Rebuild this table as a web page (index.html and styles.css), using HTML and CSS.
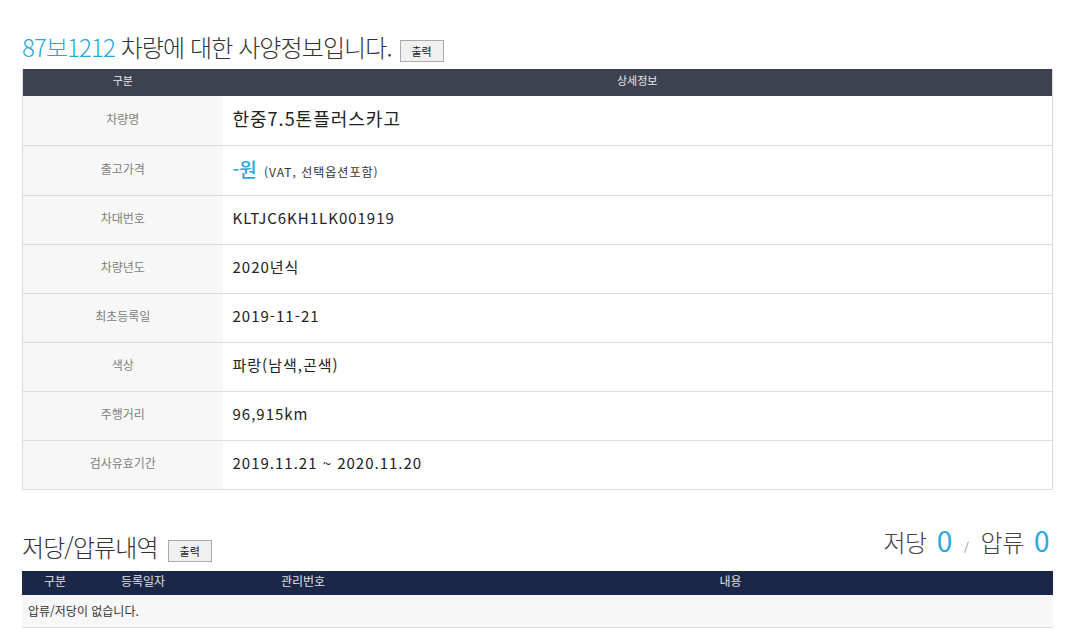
FILE: index.html
```html
<!DOCTYPE html>
<html lang="ko">
<head>
<meta charset="utf-8">
<link rel="stylesheet" href="styles.css">
</head>
<body>
<div class="page">
  <div class="title-row">
    <h2 class="title"><span class="plate">87보1212</span> 차량에 대한 사양정보입니다.</h2>
    <button class="btn">출력</button>
  </div>
  <table class="spec">
    <thead>
      <tr><th class="c-label">구분</th><th>상세정보</th></tr>
    </thead>
    <tbody>
      <tr><td class="c-label">차량명</td><td class="c-value big">한중7.5톤플러스카고</td></tr>
      <tr class="tall"><td class="c-label">출고가격</td><td class="c-value"><span class="price">-원</span> <span class="small">(VAT, 선택옵션포함)</span></td></tr>
      <tr><td class="c-label">차대번호</td><td class="c-value">KLTJC6KH1LK001919</td></tr>
      <tr><td class="c-label">차량년도</td><td class="c-value">2020년식</td></tr>
      <tr><td class="c-label">최초등록일</td><td class="c-value">2019-11-21</td></tr>
      <tr><td class="c-label">색상</td><td class="c-value">파랑(남색,곤색)</td></tr>
      <tr><td class="c-label">주행거리</td><td class="c-value">96,915km</td></tr>
      <tr><td class="c-label">검사유효기간</td><td class="c-value">2019.11.21 ~ 2020.11.20</td></tr>
    </tbody>
  </table>

  <div class="sec-row">
    <div class="sec-left">
      <h2 class="title">저당/압류내역</h2>
      <button class="btn">출력</button>
    </div>
    <div class="counts">저당 <span class="num">0</span> <span class="slash">/</span> 압류 <span class="num">0</span></div>
  </div>
  <table class="lien">
    <thead>
      <tr><th class="w1">구분</th><th class="w2">등록일자</th><th class="w3">관리번호</th><th>내용</th></tr>
    </thead>
    <tbody>
      <tr><td colspan="4" class="empty">압류/저당이 없습니다.</td></tr>
    </tbody>
  </table>
</div>
</body>
</html>
```
FILE: styles.css
```css
html, body {
  margin: 0;
  padding: 0;
  background: #fff;
}
body {
  font-family: "Noto Sans CJK KR", "Noto Sans", sans-serif;
  color: #333;
}
.page {
  width: 1031px;
  margin-left: 22px;
  padding-top: 28px;
}
.title-row {
  display: flex;
  align-items: flex-end;
  height: 34px;
}
.title {
  margin: 0;
  font-size: 24px;
  font-weight: 300;
  letter-spacing: -0.9px;
  color: #333;
  line-height: 30px;
}
.plate {
  color: #29a8df;
}
.btn {
  margin-left: 8px;
  margin-bottom: 0;
  width: 44px;
  height: 22px;
  padding: 0;
  font-family: "Noto Sans CJK KR", sans-serif;
  font-size: 11px;
  color: #222;
  background: #f0f0f0;
  border: 1px solid #aaa;
  border-radius: 0;
  line-height: 18px;
}
.spec {
  margin-top: 7px;
  width: 1031px;
  border-collapse: collapse;
  border-left: 1px solid #ddd;
  border-right: 1px solid #ddd;
}
.spec th {
  background: #3d4250;
  color: #e8e8e8;
  font-size: 11px;
  font-weight: 400;
  height: 27px;
  padding: 0;
  line-height: 14px;
  vertical-align: top;
  padding-top: 4px;
  box-sizing: border-box;
}
.spec th.c-label {
  width: 200px;
}
.spec td {
  height: 49px;
  padding: 0 0 4px 0;
  border-bottom: 1px solid #ddd;
  box-sizing: border-box;
}
.spec tr.tall td {
  height: 50px;
}
.spec td.c-label {
  background: #f7f7f7;
  text-align: center;
  font-size: 12px;
  color: #808080;
}
.spec td.c-value {
  padding-left: 10px;
  font-size: 15px;
  color: #222;
  letter-spacing: 1px;
}
.spec td.big {
  font-size: 18px;
  letter-spacing: 1px;
}
.price {
  color: #29a8df;
  font-size: 19px;
  font-weight: 500;
  letter-spacing: 0;
  margin-right: 2px;
}
.small {
  font-size: 12px;
  color: #333;
  letter-spacing: 1px;
}
.sec-row {
  margin-top: 34px;
  display: flex;
  justify-content: space-between;
  align-items: flex-end;
  height: 38px;
}
.sec-left {
  display: flex;
  align-items: flex-end;
}
.sec-left .btn {
  margin-left: 10px;
}
.counts {
  font-size: 24px;
  font-weight: 300;
  color: #444;
  line-height: 30px;
  padding-right: 4px;
  letter-spacing: -0.5px;
}
.counts .num {
  color: #29a8df;
  font-weight: 400;
  font-size: 28px;
  margin-left: 4px;
}
.counts .slash {
  font-size: 12px;
  color: #666;
  margin: 0 6px;
}
.lien {
  margin-top: 9px;
  width: 1031px;
  border-collapse: collapse;
}
.lien th {
  background: #1b2747;
  color: #e0e0e0;
  font-size: 12px;
  font-weight: 400;
  height: 24px;
  padding: 0 0 3px 0;
  line-height: 14px;
  box-sizing: border-box;
}
.lien th.w1 { width: 66px; }
.lien th.w2 { width: 110px; }
.lien th.w3 { width: 210px; }
.lien td.empty {
  background: #f7f7f7;
  height: 33px;
  padding: 0 0 0 6px;
  font-size: 12px;
  color: #333;
  border-bottom: 1px solid #ddd;
  box-sizing: border-box;
}
```
